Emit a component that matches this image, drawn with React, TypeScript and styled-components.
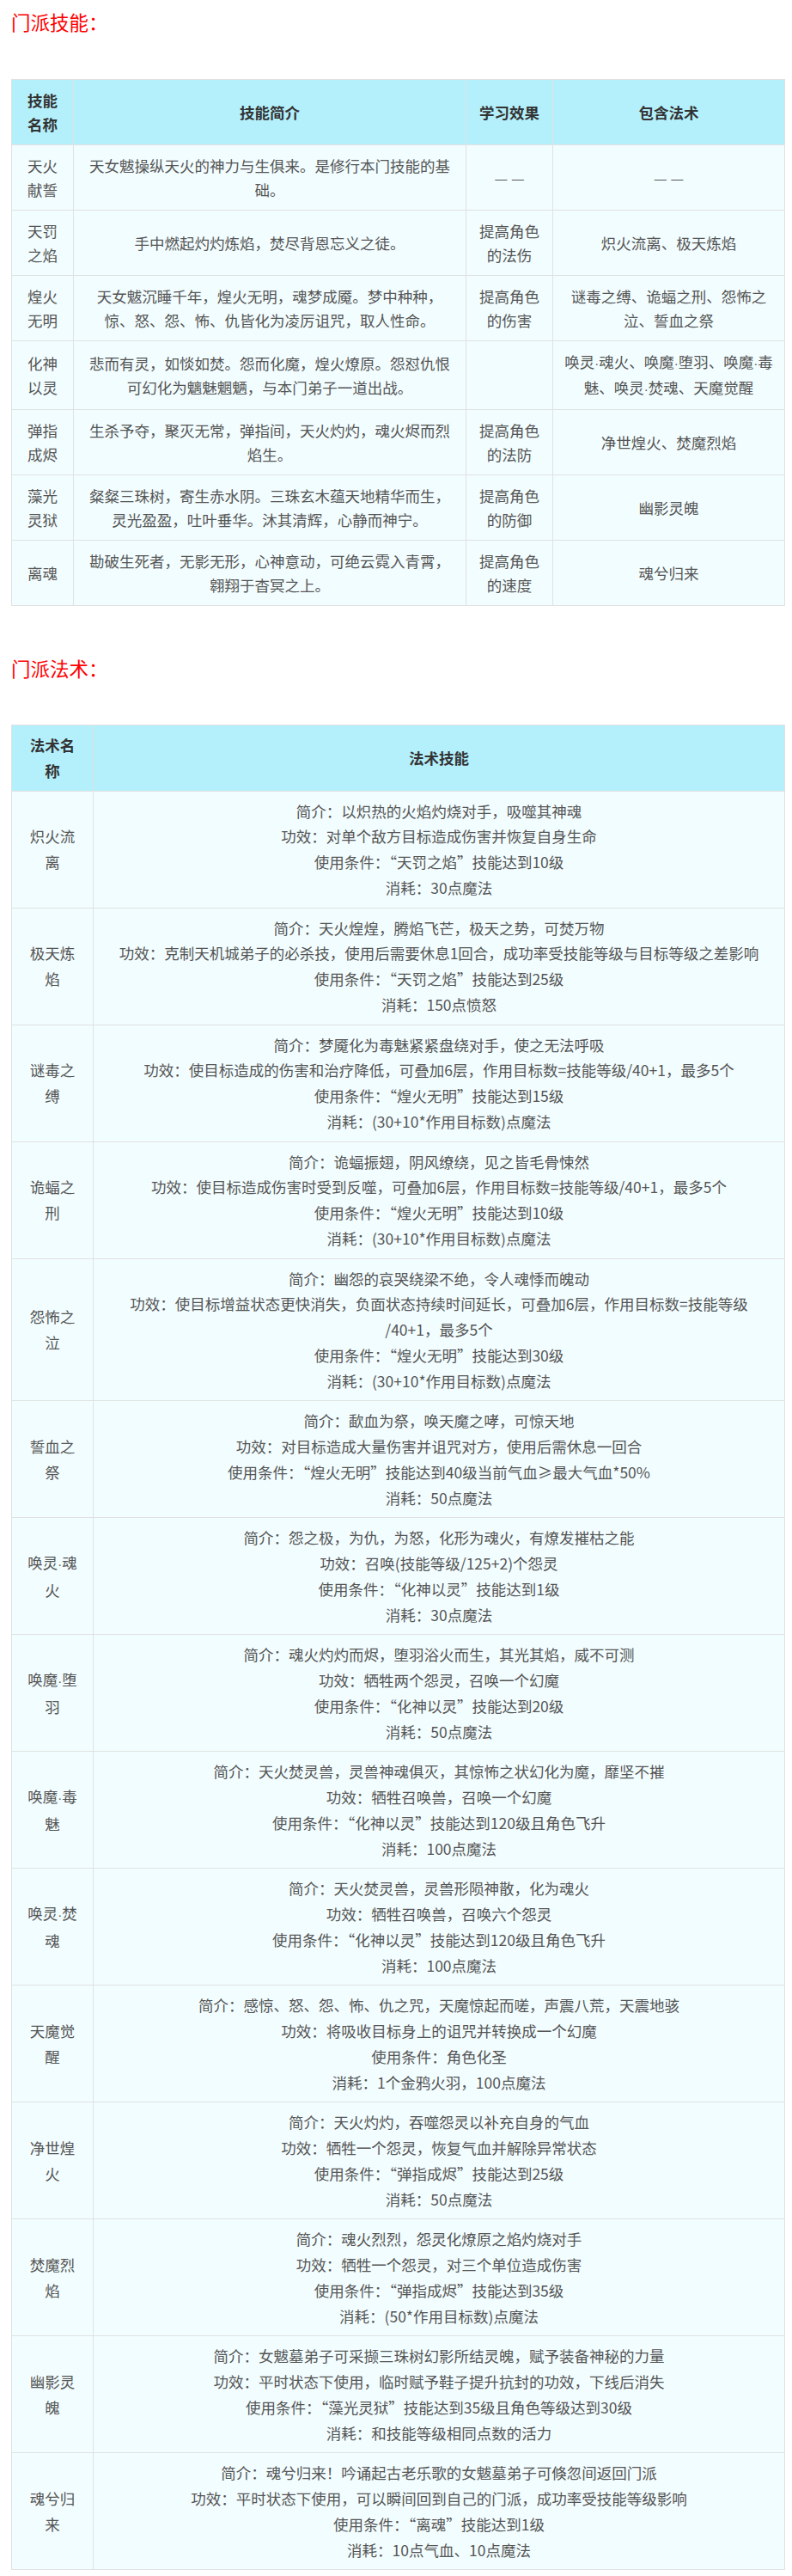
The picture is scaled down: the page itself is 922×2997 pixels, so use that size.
import React from 'react';
import styled, { createGlobalStyle } from 'styled-components';

const GlobalStyle = createGlobalStyle`
  html, body {
    margin: 0;
    padding: 0;
    background: #ffffff;
  }
  body {
    font-family: "Noto Sans CJK SC", "Noto Sans", sans-serif;
  }
`;

const Page = styled.div`
  width: 922px;
  box-sizing: border-box;
  padding: 7px 9px 13px 13px;
`;

const SectionTitle = styled.h2<{ $first?: boolean }>`
  margin: ${p => (p.$first ? '0 0 49px' : '54px 0 48px')};
  font-size: 22.5px;
  line-height: 36px;
  font-weight: 400;
  color: #ff0000;
`;

const Table = styled.table<{ $lineHeight: number; $padY: number }>`
  width: 900px;
  table-layout: fixed;
  border-collapse: collapse;
  font-size: 17.5px;
  line-height: ${p => p.$lineHeight}px;

  th,
  td {
    border: 1px solid #e1e1e1;
    padding: ${p => p.$padY}px 12.5px;
    text-align: center;
    vertical-align: middle;
  }
`;

const HeadCell = styled.th`
  background: #b4f0fc;
  color: #333333;
  font-weight: 700;
`;

const BodyCell = styled.td`
  background: #f2fdff;
  color: #555555;
  font-weight: 400;
`;

// the CJK font draws U+00B7 full width; the page shows a narrow latin dot
const Dot = styled.span`
  font-family: "Liberation Sans", Arial, sans-serif;
  font-size: 15px;
`;

const withDots = (text: string) =>
  text.split('·').map((part, i) => (
    <React.Fragment key={i}>
      {i > 0 && <Dot>·</Dot>}
      {part}
    </React.Fragment>
  ));

interface Skill {
  name: string;
  intro: string;
  effect: string;
  spells: string;
}

const skills: Skill[] = [
  {
    name: '天火献誓',
    intro: '天女魃操纵天火的神力与生俱来。是修行本门技能的基础。',
    effect: '— —',
    spells: '— —',
  },
  {
    name: '天罚之焰',
    intro: '手中燃起灼灼炼焰，焚尽背恩忘义之徒。',
    effect: '提高角色的法伤',
    spells: '炽火流离、极天炼焰',
  },
  {
    name: '煌火无明',
    intro: '天女魃沉睡千年，煌火无明，魂梦成魇。梦中种种，惊、怒、怨、怖、仇皆化为凌厉诅咒，取人性命。',
    effect: '提高角色的伤害',
    spells: '谜毒之缚、诡蝠之刑、怨怖之泣、誓血之祭',
  },
  {
    name: '化神以灵',
    intro: '悲而有灵，如惔如焚。怨而化魔，煌火燎原。怨怼仇恨可幻化为魑魅魍魉，与本门弟子一道出战。',
    effect: '',
    spells: '唤灵·魂火、唤魔·堕羽、唤魔·毒魅、唤灵·焚魂、天魔觉醒',
  },
  {
    name: '弹指成烬',
    intro: '生杀予夺，聚灭无常，弹指间，天火灼灼，魂火烬而烈焰生。',
    effect: '提高角色的法防',
    spells: '净世煌火、焚魔烈焰',
  },
  {
    name: '藻光灵狱',
    intro: '粲粲三珠树，寄生赤水阴。三珠玄木蕴天地精华而生，灵光盈盈，吐叶垂华。沐其清辉，心静而神宁。',
    effect: '提高角色的防御',
    spells: '幽影灵魄',
  },
  {
    name: '离魂',
    intro: '勘破生死者，无影无形，心神意动，可绝云霓入青霄，翱翔于杳冥之上。',
    effect: '提高角色的速度',
    spells: '魂兮归来',
  },
];

interface Spell {
  name: string;
  lines: string[];
}

const spells: Spell[] = [
  {
    name: '炽火流离',
    lines: [
      '简介：以炽热的火焰灼烧对手，吸噬其神魂',
      '功效：对单个敌方目标造成伤害并恢复自身生命',
      '使用条件：“天罚之焰”技能达到10级',
      '消耗：30点魔法',
    ],
  },
  {
    name: '极天炼焰',
    lines: [
      '简介：天火煌煌，腾焰飞芒，极天之势，可焚万物',
      '功效：克制天机城弟子的必杀技，使用后需要休息1回合，成功率受技能等级与目标等级之差影响',
      '使用条件：“天罚之焰”技能达到25级',
      '消耗：150点愤怒',
    ],
  },
  {
    name: '谜毒之缚',
    lines: [
      '简介：梦魇化为毒魅紧紧盘绕对手，使之无法呼吸',
      '功效：使目标造成的伤害和治疗降低，可叠加6层，作用目标数=技能等级/40+1，最多5个',
      '使用条件：“煌火无明”技能达到15级',
      '消耗：(30+10*作用目标数)点魔法',
    ],
  },
  {
    name: '诡蝠之刑',
    lines: [
      '简介：诡蝠振翅，阴风缭绕，见之皆毛骨悚然',
      '功效：使目标造成伤害时受到反噬，可叠加6层，作用目标数=技能等级/40+1，最多5个',
      '使用条件：“煌火无明”技能达到10级',
      '消耗：(30+10*作用目标数)点魔法',
    ],
  },
  {
    name: '怨怖之泣',
    lines: [
      '简介：幽怨的哀哭绕梁不绝，令人魂悸而魄动',
      '功效：使目标增益状态更快消失，负面状态持续时间延长，可叠加6层，作用目标数=技能等级\u200B/40+1，最多5个',
      '使用条件：“煌火无明”技能达到30级',
      '消耗：(30+10*作用目标数)点魔法',
    ],
  },
  {
    name: '誓血之祭',
    lines: [
      '简介：歃血为祭，唤天魔之哮，可惊天地',
      '功效：对目标造成大量伤害并诅咒对方，使用后需休息一回合',
      '使用条件：“煌火无明”技能达到40级当前气血≥最大气血*50%',
      '消耗：50点魔法',
    ],
  },
  {
    name: '唤灵·魂火',
    lines: [
      '简介：怨之极，为仇，为怒，化形为魂火，有燎发摧枯之能',
      '功效：召唤(技能等级/125+2)个怨灵',
      '使用条件：“化神以灵”技能达到1级',
      '消耗：30点魔法',
    ],
  },
  {
    name: '唤魔·堕羽',
    lines: [
      '简介：魂火灼灼而烬，堕羽浴火而生，其光其焰，威不可测',
      '功效：牺牲两个怨灵，召唤一个幻魔',
      '使用条件：“化神以灵”技能达到20级',
      '消耗：50点魔法',
    ],
  },
  {
    name: '唤魔·毒魅',
    lines: [
      '简介：天火焚灵兽，灵兽神魂俱灭，其惊怖之状幻化为魔，靡坚不摧',
      '功效：牺牲召唤兽，召唤一个幻魔',
      '使用条件：“化神以灵”技能达到120级且角色飞升',
      '消耗：100点魔法',
    ],
  },
  {
    name: '唤灵·焚魂',
    lines: [
      '简介：天火焚灵兽，灵兽形陨神散，化为魂火',
      '功效：牺牲召唤兽，召唤六个怨灵',
      '使用条件：“化神以灵”技能达到120级且角色飞升',
      '消耗：100点魔法',
    ],
  },
  {
    name: '天魔觉醒',
    lines: [
      '简介：感惊、怒、怨、怖、仇之咒，天魔惊起而嗟，声震八荒，天震地骇',
      '功效：将吸收目标身上的诅咒并转换成一个幻魔',
      '使用条件：角色化圣',
      '消耗：1个金鸦火羽，100点魔法',
    ],
  },
  {
    name: '净世煌火',
    lines: [
      '简介：天火灼灼，吞噬怨灵以补充自身的气血',
      '功效：牺牲一个怨灵，恢复气血并解除异常状态',
      '使用条件：“弹指成烬”技能达到25级',
      '消耗：50点魔法',
    ],
  },
  {
    name: '焚魔烈焰',
    lines: [
      '简介：魂火烈烈，怨灵化燎原之焰灼烧对手',
      '功效：牺牲一个怨灵，对三个单位造成伤害',
      '使用条件：“弹指成烬”技能达到35级',
      '消耗：(50*作用目标数)点魔法',
    ],
  },
  {
    name: '幽影灵魄',
    lines: [
      '简介：女魃墓弟子可采撷三珠树幻影所结灵魄，赋予装备神秘的力量',
      '功效：平时状态下使用，临时赋予鞋子提升抗封的功效，下线后消失',
      '使用条件：“藻光灵狱”技能达到35级且角色等级达到30级',
      '消耗：和技能等级相同点数的活力',
    ],
  },
  {
    name: '魂兮归来',
    lines: [
      '简介：魂兮归来！吟诵起古老乐歌的女魃墓弟子可倏忽间返回门派',
      '功效：平时状态下使用，可以瞬间回到自己的门派，成功率受技能等级影响',
      '使用条件：“离魂”技能达到1级',
      '消耗：10点气血、10点魔法',
    ],
  },
];

const App: React.FC = () => {
  return (
    <>
      <GlobalStyle />
      <Page lang="zh-CN">
        <SectionTitle $first>门派技能：</SectionTitle>
        <Table $lineHeight={28} $padY={9.5}>
          <colgroup>
            <col style={{ width: 72 }} />
            <col style={{ width: 457 }} />
            <col style={{ width: 101 }} />
            <col style={{ width: 270 }} />
          </colgroup>
          <thead>
            <tr>
              <HeadCell>技能名称</HeadCell>
              <HeadCell>技能简介</HeadCell>
              <HeadCell>学习效果</HeadCell>
              <HeadCell>包含法术</HeadCell>
            </tr>
          </thead>
          <tbody>
            {skills.map(s => (
              <tr key={s.name}>
                <BodyCell>{s.name}</BodyCell>
                <BodyCell>{s.intro}</BodyCell>
                <BodyCell>{s.effect}</BodyCell>
                <BodyCell>{withDots(s.spells)}</BodyCell>
              </tr>
            ))}
          </tbody>
        </Table>

        <SectionTitle>门派法术：</SectionTitle>
        <Table $lineHeight={29.75} $padY={8}>
          <colgroup>
            <col style={{ width: 95 }} />
            <col style={{ width: 805 }} />
          </colgroup>
          <thead>
            <tr>
              <HeadCell>法术名称</HeadCell>
              <HeadCell>法术技能</HeadCell>
            </tr>
          </thead>
          <tbody>
            {spells.map(sp => (
              <tr key={sp.name}>
                <BodyCell>{withDots(sp.name)}</BodyCell>
                <BodyCell>
                  {sp.lines.map((line, i) => (
                    <React.Fragment key={i}>
                      {i > 0 && <br />}
                      {line}
                    </React.Fragment>
                  ))}
                </BodyCell>
              </tr>
            ))}
          </tbody>
        </Table>
      </Page>
    </>
  );
};

export default App;
